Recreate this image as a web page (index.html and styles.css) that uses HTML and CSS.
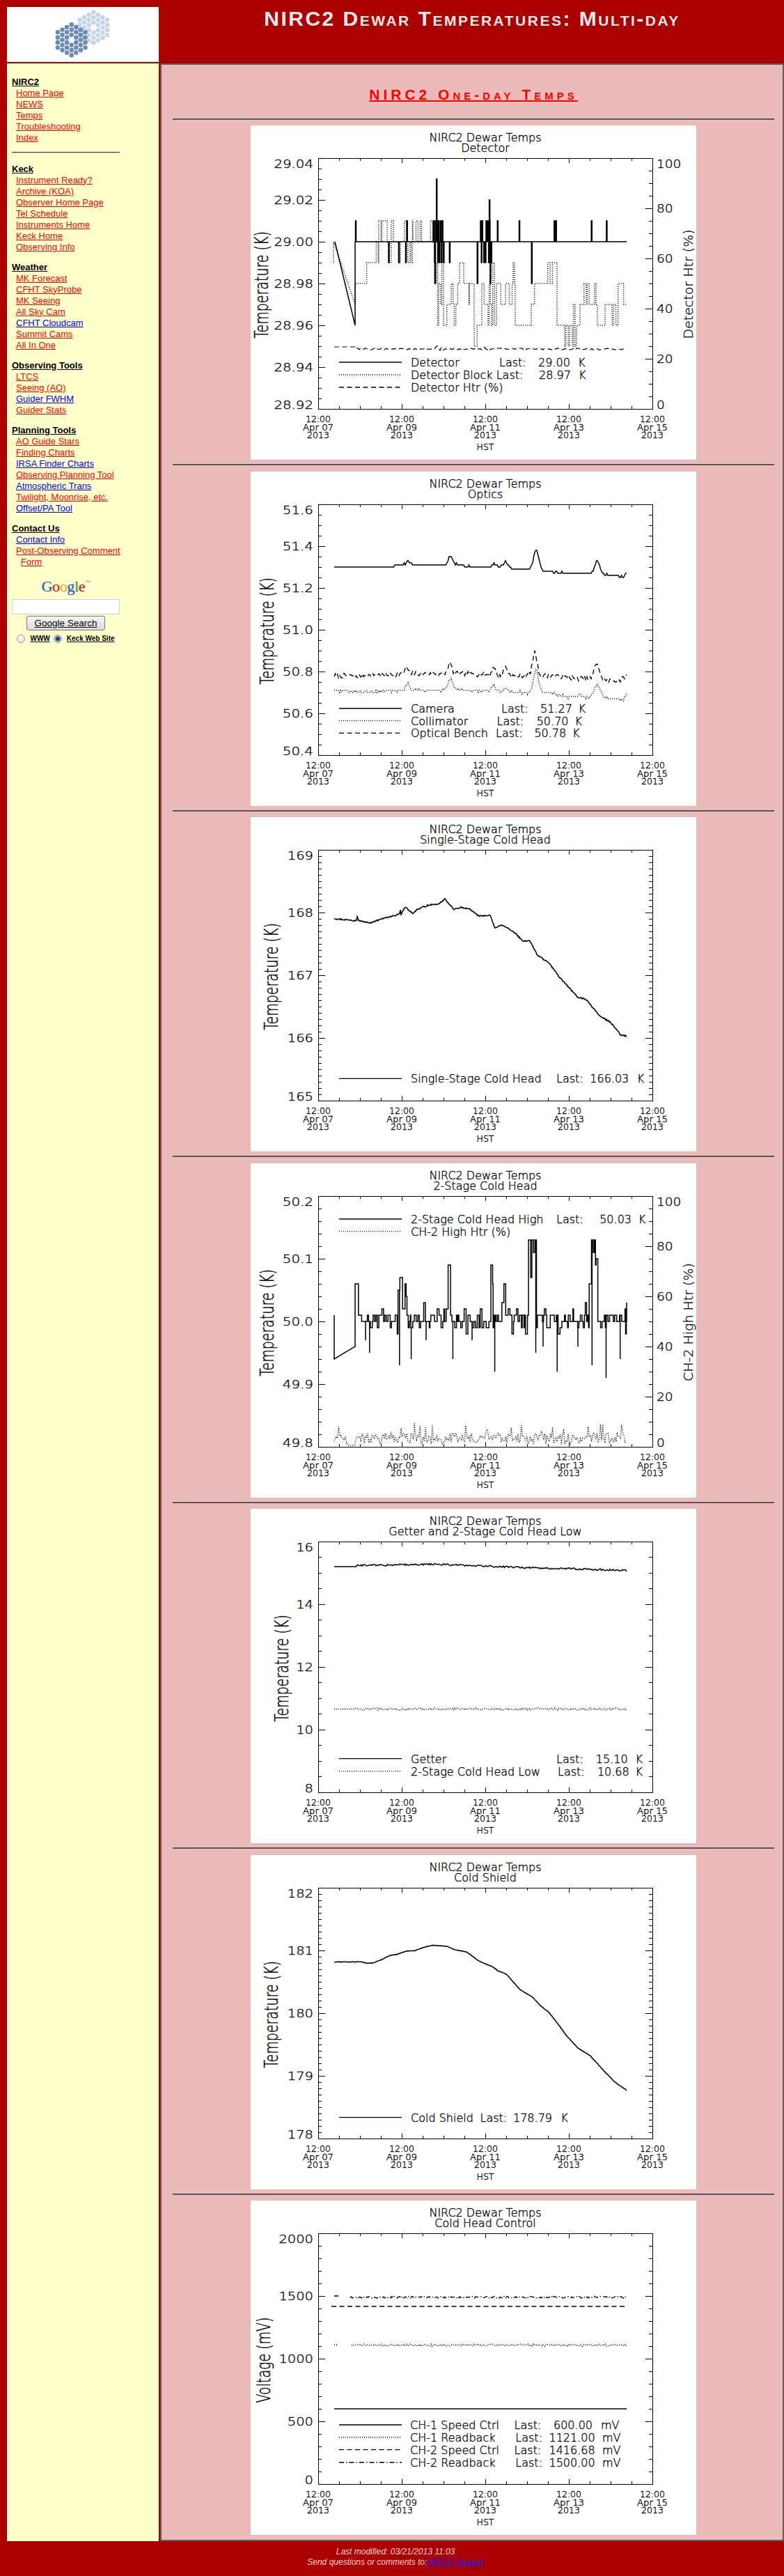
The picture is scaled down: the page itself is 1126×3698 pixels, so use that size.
FILE: index.html
```html
<!DOCTYPE html>
<html lang="en">
<head>
<meta charset="utf-8">
<title>NIRC2 Dewar Temperatures: Multi-day</title>
<link rel="stylesheet" href="styles.css">
</head>
<body>
<div class="page">
  <div class="logo"><svg id="logo" width="218" height="79" viewBox="0 0 218 79"></svg></div>
  <div class="masthead"><h1>NIRC2 Dewar Temperatures: Multi-day</h1></div>

  <nav class="side">
    <div class="side-inner">
      <div class="group">
        <div class="gh"><a href="#">NIRC2</a></div>
        <ul class="links">
          <li><a href="#">Home Page</a></li>
          <li><a href="#">NEWS</a></li>
          <li><a href="#">Temps</a></li>
          <li><a href="#">Troubleshooting</a></li>
          <li><a href="#">Index</a></li>
        </ul>
      </div>
      <hr class="side-rule">
      <div class="group">
        <div class="gh"><a href="#">Keck</a></div>
        <ul class="links">
          <li><a href="#">Instrument Ready?</a></li>
          <li><a href="#">Archive (KOA)</a></li>
          <li><a href="#">Observer Home Page</a></li>
          <li><a href="#">Tel Schedule</a></li>
          <li><a href="#">Instruments Home</a></li>
          <li><a href="#">Keck Home</a></li>
          <li><a href="#">Observing Info</a></li>
        </ul>
      </div>
      <div class="group">
        <div class="gh"><a href="#">Weather</a></div>
        <ul class="links">
          <li><a href="#">MK Forecast</a></li>
          <li><a href="#">CFHT SkyProbe</a></li>
          <li><a href="#">MK Seeing</a></li>
          <li><a href="#">All Sky Cam</a></li>
          <li><a class="new" href="#">CFHT Cloudcam</a></li>
          <li><a href="#">Summit Cams</a></li>
          <li><a href="#">All In One</a></li>
        </ul>
      </div>
      <div class="group">
        <div class="gh"><a href="#">Observing Tools</a></div>
        <ul class="links">
          <li><a href="#">LTCS</a></li>
          <li><a href="#">Seeing (AO)</a></li>
          <li><a class="new" href="#">Guider FWHM</a></li>
          <li><a href="#">Guider Stats</a></li>
        </ul>
      </div>
      <div class="group">
        <div class="gh"><a href="#">Planning Tools</a></div>
        <ul class="links">
          <li><a href="#">AO Guide Stars</a></li>
          <li><a href="#">Finding Charts</a></li>
          <li><a class="new" href="#">IRSA Finder Charts</a></li>
          <li><a href="#">Observing Planning Tool</a></li>
          <li><a class="new" href="#">Atmospheric Trans</a></li>
          <li><a href="#">Twilight, Moonrise, etc.</a></li>
          <li><a class="new" href="#">Offset/PA Tool</a></li>
        </ul>
      </div>
      <div class="group">
        <div class="gh"><a href="#">Contact Us</a></div>
        <ul class="links">
          <li><a class="new" href="#">Contact Info</a></li>
          <li><a href="#">Post-Observing Comment Form</a></li>
        </ul>
      </div>
      <form class="search" action="#">
        <div class="glogo"><span class="g1">G</span><span class="g2">o</span><span class="g3">o</span><span class="g1">g</span><span class="g4">l</span><span class="g2">e</span><span class="tm">TM</span></div>
        <input class="q" type="text" aria-label="Search">
        <button class="btn" type="button">Google Search</button>
        <div class="scope">
          <input class="radio" type="radio" name="sitesearch" aria-label="WWW"><span class="scope-lbl">WWW</span>
          <input class="radio" type="radio" name="sitesearch" checked aria-label="Keck Web Site"><span class="scope-lbl">Keck Web Site</span>
        </div>
      </form>
    </div>
  </nav>

  <main class="main">
    <h2 class="heading"><a href="#">NIRC2 One-day Temps</a></h2>
    <hr class="rule"><div class="chart"><svg class="plot" data-chart="0" width="640" height="480"></svg></div>
    <hr class="rule"><div class="chart"><svg class="plot" data-chart="1" width="640" height="480"></svg></div>
    <hr class="rule"><div class="chart"><svg class="plot" data-chart="2" width="640" height="480"></svg></div>
    <hr class="rule"><div class="chart"><svg class="plot" data-chart="3" width="640" height="480"></svg></div>
    <hr class="rule"><div class="chart"><svg class="plot" data-chart="4" width="640" height="480"></svg></div>
    <hr class="rule"><div class="chart"><svg class="plot" data-chart="5" width="640" height="480"></svg></div>
    <hr class="rule"><div class="chart"><svg class="plot" data-chart="6" width="640" height="480"></svg></div>
  </main>
</div>
<footer class="foot">
  <div>Last modified: 03/21/2013 11:03</div>
  <div>Send questions or comments to:<a href="#">NIRC2 Support</a></div>
</footer>
<script src="script.js"></script>
</body>
</html>
```

FILE: styles.css
```css
* { box-sizing: border-box; }
html, body { margin: 0; padding: 0; }
body {
  background: #aa0000;
  font-family: "Liberation Sans", Arial, sans-serif;
  font-size: 13px;
  color: #000;
}
.page {
  width: 1126px;
  padding: 10px 0 0 10px;
  display: grid;
  grid-template-columns: 218px 1fr;
  grid-template-rows: 79px auto;
  gap: 2px;
}
.logo { background: #fff; }
.logo svg { display: block; }
.masthead { display: flex; justify-content: center; align-items: flex-start; }
.masthead h1 {
  margin: 0;
  font-size: 30px;
  line-height: 34px;
  font-weight: bold;
  font-variant: small-caps;
  letter-spacing: 2.5px;
  color: #e9e9e9;
}

/* sidebar */
.side { background: #ffffcc; padding: 19px 0 0 7px; }
.side-inner { width: 160px; }
.group + .group { margin-top: 13px; }
.gh, .links li { line-height: 16px; }
.gh a { color: #000; font-weight: bold; text-decoration: underline; }
.links { list-style: none; margin: 0; padding: 0; }
.links li { padding-left: 13px; text-indent: -7px; }
.links a { color: #ff0000; text-decoration: underline; }
.links a.new { color: #0000ff; }
.side-rule {
  width: 155px;
  height: 2px;
  margin: 12px 0 14.7px;
  border: 0;
  border-top: 1px solid #444;
  border-bottom: 1px solid #c8c8c8;
}
.search {
  width: 155px;
  margin: 8px 0 0;
  display: flex;
  flex-direction: column;
  align-items: center;
}
.glogo {
  font-family: "Liberation Serif", "Times New Roman", serif;
  font-size: 22px;
  line-height: 24px;
  letter-spacing: -0.4px;
  text-shadow: 1px 1px 1px #c9c9c9;
}
.g1 { color: #2a55c8; }
.g2 { color: #c8190f; }
.g3 { color: #e7b712; }
.g4 { color: #2f9c3c; }
.tm { font-family: "Liberation Sans", sans-serif; font-size: 5px; color: #999; vertical-align: 12px; margin-left: 1px; text-shadow: none; }
.q {
  width: 155px;
  height: 22px;
  margin: 6px 0 0;
  border: 1px solid #cfcfcf;
  background: #fff;
}
.btn {
  width: 113px;
  height: 21px;
  margin-top: 2px;
  padding: 0;
  border: 1px solid #767676;
  border-radius: 3px;
  background: linear-gradient(#f6f6f6, #dcdcdc);
  font-family: "Liberation Sans", Arial, sans-serif;
  font-size: 13.5px;
  color: #000;
  text-decoration: underline;
}
.scope {
  margin-top: 6px;
  display: flex;
  align-items: center;
  font-size: 10px;
  font-weight: bold;
}
.scope-lbl { text-decoration: underline; margin-left: 7px; }
.scope-lbl + .radio { margin-left: 5px; }
.radio {
  -webkit-appearance: none;
  appearance: none;
  width: 12px;
  height: 12px;
  margin: 0;
  border: 1px solid #9a9a9a;
  border-radius: 50%;
  background: radial-gradient(circle at 40% 35%, #ffffff, #d6d6d6);
}
.radio:checked {
  background: radial-gradient(circle, #1c3c6a 0, #1c3c6a 2.4px, #8fa9cc 3.6px, #e9eef5 6px);
}

/* main */
.main {
  background: #ebbaba;
  border: 2px solid #5e5e5e;
  padding: 0 12px 7px 16px;
}
.heading {
  margin: 31px 0 21.5px;
  text-align: center;
  font-size: 21px;
  line-height: 24px;
  font-weight: bold;
  font-variant: small-caps;
  letter-spacing: 5px;
}
.heading a { color: #ff0000; text-decoration: underline; text-decoration-thickness: 2px; }
.rule {
  height: 2px;
  margin: 6px 0 8.5px;
  border: 0;
  background: #555;
}
.chart { width: 640px; height: 480px; margin: 0 auto; background: #fff; }
.plot { display: block; }
.plot text {
  font-family: "DejaVu Sans", "Liberation Sans", sans-serif;
  font-weight: 200;
  fill: #000;
  stroke: #000;
  stroke-width: 0.35px;
}

/* footer */
.foot {
  width: 1126px;
  padding: 8px 0 0 10px;
  text-align: center;
  font-style: italic;
  font-size: 12px;
  line-height: 14.5px;
  color: #ffd2d2;
}
.foot a { color: #1a1aff; text-decoration: underline; }
```

FILE: script.js
```js
(function () {
  var NS = 'http://www.w3.org/2000/svg';
  function el(tag, attrs, parent) {
    var e = document.createElementNS(NS, tag);
    for (var k in attrs) e.setAttribute(k, attrs[k]);
    if (parent) parent.appendChild(e);
    return e;
  }
  function txt(parent, s, attrs) { var t = el('text', attrs, parent); t.textContent = s; return t; }
  function rng(seed) {
    var s = seed >>> 0;
    return function () { s = (Math.imul(s, 1664525) + 1013904223) >>> 0; return s / 4294967296; };
  }
  function interp(p, x) {
    if (x <= p[0][0]) return p[0][1];
    for (var i = 1; i < p.length; i++) {
      if (x <= p[i][0]) { var a = p[i - 1], b = p[i]; return a[1] + (b[1] - a[1]) * (x - a[0]) / (b[0] - a[0]); }
    }
    return p[p.length - 1][1];
  }
  function f(n) { return String(Math.round(n * 10) / 10); }

  /* ---------- logo: two segmented mirrors ---------- */
  var logo = document.getElementById('logo');
  function hex(cx, cy, fill) {
    for (var q = -3; q <= 3; q++) for (var r = -3; r <= 3; r++) {
      if (Math.abs(q + r) > 3 || (q === 0 && r === 0)) continue;
      el('circle', { cx: f(cx + q * 6.6), cy: f(cy + (r + q / 2) * 7.3), r: 3.3, fill: fill }, logo);
    }
  }
  hex(124.3, 29.5, '#c6d5e6');
  hex(92.7, 47.3, '#6a8cb4');

  /* ---------- chart helpers ---------- */
  var X0 = 97, X1 = 577, YT = 47, YB = 407;
  var DASH = { solid: null, dot: '1 2', dash: '7 4.5', dashdot: '7 3 1.5 3' };
  function R(v) { return YB - v / 100 * 360; }

  function hatch(Y, start, segs, q, seed, smin, smax) {
    var r = rng(seed), d = start;
    segs.forEach(function (s) {
      var a = s[0], b = s[1], lo = s[2], hi = s[3], n = Math.round((hi - lo) / q), x = a;
      d += 'H' + f(x);
      while (x < b - 0.01) {
        var v = lo + Math.round(r() * n) * q;
        d += 'V' + f(Y(v));
        x = Math.min(b, x + smin + r() * (smax - smin));
        d += 'H' + f(x);
      }
    });
    return d;
  }
  function noisy(x0, x1, step, fn, seed, start) {
    var r = rng(seed), d = start || '';
    for (var x = x0; x <= x1 + 0.001; x += step) d += (d ? 'L' : 'M') + f(x) + ' ' + f(fn(x, r));
    return d;
  }
  function bumpy(Y, base, bumps, q, noise, seed, x0, x1, step) {
    return noisy(x0, x1, step, function (x, r) {
      var v = interp(base, x);
      bumps.forEach(function (b) { v += b[1] * Math.exp(-Math.pow((x - b[0]) / b[2], 2)); });
      v += (r() - 0.5) * noise;
      v = Math.round(v / q) * q;
      return Y(v);
    }, seed);
  }

  /* ---------- chart data ---------- */
  function c1det(Y) {
    var r = rng(11), base = f(Y(29.00));
    var d = 'M121 ' + base + 'L150 ' + f(Y(28.96)) + 'V' + base;
    var sp = [[150.5, 29.01], [198, 28.99], [212.5, 28.99], [222.5, 28.99], [224.2, 29.01], [264.5, 28.98],
      [266.7, 29.03], [285.4, 28.99], [325.3, 28.98], [342.6, 29.02], [343.9, 28.98], [354.3, 29.01],
      [385.5, 29.01], [403.3, 28.98], [435.8, 29.01], [438.2, 29.01], [489.2, 29.01], [510.9, 29.01]];
    for (var x = 262; x <= 277; x += 0.8 + r() * 1.2) sp.push([x, r() < 0.5 ? 29.01 : 28.99]);
    for (x = 330; x <= 346; x += 1 + r() * 1.6) sp.push([x, r() < 0.55 ? 29.01 : 28.99]);
    sp.sort(function (a, b) { return a[0] - b[0]; });
    sp.forEach(function (s) { d += 'H' + f(s[0]) + 'V' + f(Y(s[1])) + 'H' + f(s[0] + 1) + 'V' + base; });
    return d + 'H540';
  }
  function c1block(Y) {
    var segs = [[150, 173, 28.98, 28.99], [173, 184, 28.99, 29.00], [184, 197, 29.00, 29.01], [197, 200, 28.98, 29.00],
      [200, 233, 28.99, 29.01], [233, 236, 29.00, 29.02], [236, 262, 29.00, 29.01], [262, 277, 28.96, 29.01],
      [277, 295, 28.96, 28.98], [295, 314, 28.97, 28.99], [314, 321, 28.98, 28.98], [321, 332, 28.95, 28.96],
      [332, 353, 28.96, 28.99], [353, 369, 28.97, 28.98], [369, 380, 28.97, 28.99], [380, 403, 28.96, 28.96],
      [403, 412, 28.96, 28.98], [412, 423, 28.98, 28.98], [423, 440, 28.98, 28.99], [440, 451, 28.96, 28.96],
      [451, 462, 28.95, 28.96], [462, 475, 28.95, 28.97], [475, 496, 28.97, 28.98], [496, 498, 28.95, 28.99],
      [498, 509, 28.96, 28.96], [509, 523, 28.96, 28.97], [523, 540, 28.96, 28.98]];
    var start = 'M119 ' + f(Y(28.99)) + 'V' + f(Y(29.00)) + 'L150 ' + f(Y(28.97));
    return hatch(Y, start, segs, 0.01, 21, 1.2, 3.5);
  }
  function c1htr() {
    return noisy(150, 540, 2, function (x, r) {
      var y = 321 + (r() - 0.5) * 2.4;
      if ((x > 262 && x < 278) || (x > 330 && x < 346)) y += (r() - 0.6) * 8;
      return y;
    }, 31, 'M120 318H150');
  }

  function c4main(Y) {
    var r = rng(404);
    var d = 'M120 ' + f(Y(49.99)) + 'V' + f(Y(50.01)) + 'V' + f(Y(49.94)) + 'L150 ' + f(Y(49.96));
    var bursts = [[150, 153, 50.06], [211, 224, 50.07], [279, 285, 50.09], [345, 348, 50.09], [360, 364, 50.06],
      [399, 410, 50.13], [486, 497, 50.13], [535, 538, 50.06]];
    var downs = [[165, 49.97], [170.8, 49.95], [213.8, 49.93], [230.6, 49.94], [252, 49.97], [290.4, 49.94],
      [318, 49.97], [350.6, 49.92], [409.5, 49.95], [420, 49.96], [440.2, 49.92], [470, 49.96], [490.3, 49.93],
      [510.5, 49.91], [530.7, 49.94]];
    var x = 150, di = 0;
    while (x < 540) {
      var v, b = null;
      bursts.forEach(function (bb) { if (x >= bb[0] && x <= bb[1]) b = bb; });
      var t = r();
      if (b) v = t < 0.45 ? b[2] : b[2] - 0.01 * Math.ceil(r() * 7);
      else v = t < 0.38 ? 50.00 : t < 0.68 ? 50.01 : t < 0.9 ? 49.99 : t < 0.95 ? 50.02 : t < 0.98 ? 49.98 : 50.03;
      d += 'V' + f(Y(v));
      var nx = Math.min(540, x + 0.7 + r() * 2.2);
      while (di < downs.length && downs[di][0] < nx) {
        d += 'H' + f(downs[di][0]) + 'V' + f(Y(downs[di][1])) + 'V' + f(Y(v));
        di++;
      }
      d += 'H' + f(nx);
      x = nx;
    }
    return d + 'V' + f(Y(50.03));
  }
  function c4htr() {
    return noisy(120, 540, 1.6, function (x, r) {
      var p = 1 + r() * 4.5;
      if (r() < 0.08) p += 4;
      if (x > 140 && x < 150) p = 0.5;
      return R(p);
    }, 77);
  }

  var pts3 = [[120, 146], [152, 148.7], [153, 143.4], [155, 148.7], [171.7, 152], [188.5, 146], [213.8, 139.4], [215, 132.7],
    [216, 139], [222.2, 128.7], [232.7, 138.7], [239, 132.7], [255.9, 126], [268.5, 125.4], [279, 117.7], [291.6, 132],
    [302.1, 129.4], [314.8, 132], [327.4, 142], [344.2, 141], [350.6, 158.7], [361.1, 155.4], [377.9, 164.4],
    [390.5, 177.7], [401.1, 177.7], [411.6, 197.7], [428.4, 209.4], [443.2, 229.4], [470.5, 259.4], [481, 261],
    [502, 286], [516.8, 294.4], [531.5, 312.7], [540, 314.4]];
  var pts6 = [[119, 155], [121.2, 153.4], [159, 153.4], [167.5, 155.4], [175.9, 155], [188.5, 150], [199, 144.4],
    [209.6, 142.7], [224.3, 137.7], [234.8, 137.7], [247.4, 132.7], [262.2, 129.4], [281.1, 131], [293.7, 136],
    [310.6, 139.4], [327.4, 152], [348.4, 161], [354.8, 166], [367.4, 171], [386.3, 192.7], [405.3, 204.4],
    [415.8, 216], [428.4, 226], [439, 239.4], [453.7, 259.4], [470.5, 277.7], [487.3, 287.7], [508.4, 311],
    [523.1, 326], [540, 337.7]];

  var charts = [
    {
      title2: 'Detector', ymin: 28.92, ymax: 29.04, major: 0.02, minor: 4, dec: 2,
      ytitle: 'Temperature (K)', ytx: 25.2, right: 'Detector Htr (%)',
      series: [
        { style: 'solid', w: 1.5, d: c1det },
        { style: 'dot', w: 1.5, d: c1block },
        { style: 'dash', w: 1.2, d: c1htr }
      ],
      legend: [
        { y: 340, style: 'solid', parts: [['Detector', 230], ['Last:', 357], ['29.00', 413], ['K', 470]] },
        { y: 358, style: 'dot', parts: [['Detector Block Last:', 230], ['28.97', 414], ['K', 471]] },
        { y: 376, style: 'dash', parts: [['Detector Htr (%)', 230]] }
      ]
    },
    {
      title2: 'Optics', ymin: 50.4, ymax: 51.6, major: 0.2, minor: 4, dec: 1,
      ytitle: 'Temperature (K)', ytx: 32.8,
      series: [
        { style: 'solid', w: 1.5, d: function (Y) {
          return bumpy(Y, [[120, 51.30], [200, 51.30], [215, 51.31], [300, 51.31], [322, 51.30], [370, 51.30], [375, 51.29],
            [400, 51.29], [425, 51.28], [455, 51.27], [500, 51.27], [515, 51.26], [535, 51.255], [540, 51.27]],
            [[226, 0.02, 4], [287, 0.04, 5], [349, 0.02, 3.5], [366, 0.025, 4], [410, 0.10, 5], [498, 0.06, 5]],
            0.01, 0.008, 5, 120, 540, 1.5);
        } },
        { style: 'dot', w: 1.5, d: function (Y) {
          return bumpy(Y, [[120, 50.71], [160, 50.70], [200, 50.71], [300, 50.71], [380, 50.70], [430, 50.70],
            [450, 50.68], [480, 50.68], [520, 50.67], [535, 50.66], [540, 50.70]],
            [[226, 0.03, 4], [287, 0.06, 5], [349, 0.03, 3.5], [366, 0.02, 4], [410, 0.11, 5], [498, 0.06, 6]],
            0.01, 0.012, 6, 120, 540, 1.5);
        } },
        { style: 'dash', w: 1.3, d: function (Y) {
          return bumpy(Y, [[120, 50.78], [160, 50.78], [230, 50.79], [300, 50.79], [380, 50.78], [430, 50.78],
            [460, 50.77], [500, 50.76], [530, 50.755], [540, 50.78]],
            [[224, 0.03, 3.5], [286, 0.05, 4], [349, 0.04, 3], [366, 0.04, 4], [408, 0.11, 4.5], [497, 0.08, 5]],
            0.005, 0.02, 7, 120, 540, 1.5);
        } }
      ],
      legend: [
        { y: 340, style: 'solid', parts: [['Camera', 230], ['Last:', 360], ['51.27', 416], ['K', 470.5]] },
        { y: 357.7, style: 'dot', parts: [['Collimator', 230], ['Last:', 353.5], ['50.70', 410.7], ['K', 465.5]] },
        { y: 375.4, style: 'dash', parts: [['Optical Bench', 230], ['Last:', 352], ['50.78', 407.4], ['K', 462]] }
      ]
    },
    {
      title2: 'Single-Stage Cold Head', ymin: 165, ymax: 169, major: 1, minor: 10, dec: 0,
      ytitle: 'Temperature (K)', ytx: 39.1,
      series: [
        { style: 'solid', w: 1.6, d: function () {
          return noisy(120, 540, 1, function (x, r) { return interp(pts3, x) + (r() - 0.5) * 1.8; }, 3);
        } }
      ],
      legend: [
        { y: 375.4, style: 'solid', parts: [['Single-Stage Cold Head', 230], ['Last:', 439], ['166.03', 487.3], ['K', 554.7]] }
      ]
    },
    {
      title2: '2-Stage Cold Head', ymin: 49.8, ymax: 50.2, major: 0.1, minor: 5, dec: 1,
      ytitle: 'Temperature (K)', ytx: 32.8, right: 'CH-2 High Htr (%)',
      series: [
        { style: 'solid', w: 1.5, d: c4main },
        { style: 'dot', w: 1.4, d: c4htr }
      ],
      legend: [
        { y: 80, style: 'solid', parts: [['2-Stage Cold Head High', 230], ['Last:', 439], ['50.03', 501.2], ['K', 556.8]] },
        { y: 97.7, style: 'dot', parts: [['CH-2 High Htr (%)', 230]] }
      ]
    },
    {
      title2: 'Getter and 2-Stage Cold Head Low', ymin: 8, ymax: 16, major: 2, minor: 4, dec: 0,
      ytitle: 'Temperature (K)', ytx: 53.8,
      series: [
        { style: 'solid', w: 1.5, d: function () {
          var b = [[120, 83], [150, 83], [152, 81.5], [256, 79.5], [300, 81], [400, 84.5], [480, 86.5], [540, 88.5]];
          return noisy(120, 540, 1.5, function (x, r) { return x < 152 ? 83 : interp(b, x) + (r() - 0.5) * 2.6; }, 55);
        } },
        { style: 'dot', w: 1.5, d: function () {
          return noisy(120, 540, 1.5, function (x, r) { return x < 150 ? 287.5 : 287.5 + (r() - 0.5) * 3.2; }, 56);
        } }
      ],
      legend: [
        { y: 358.7, style: 'solid', parts: [['Getter', 230], ['Last:', 439], ['15.10', 495.8], ['K', 552.6]] },
        { y: 376.7, style: 'dot', parts: [['2-Stage Cold Head Low', 230], ['Last:', 441], ['10.68', 497.9], ['K', 552.6]] }
      ]
    },
    {
      title2: 'Cold Shield', ymin: 178, ymax: 182, major: 1, minor: 10, dec: 0,
      ytitle: 'Temperature (K)', ytx: 39.1,
      series: [
        { style: 'solid', w: 1.6, d: function () {
          return noisy(120, 540, 1, function (x, r) { return interp(pts6, x) + (r() - 0.5) * 0.6; }, 6);
        } }
      ],
      legend: [
        { y: 376.7, style: 'solid', parts: [['Cold Shield', 230], ['Last:', 329.5], ['178.79', 377], ['K', 445.2]] }
      ]
    },
    {
      title2: 'Cold Head Control', ymin: 0, ymax: 2000, major: 500, minor: 5, dec: 0,
      ytitle: 'Voltage (mV)', ytx: 28.2,
      series: [
        { style: 'solid', w: 1.5, d: function (Y) { return 'M120 ' + f(Y(600)) + 'H540'; } },
        { style: 'dot', w: 1.5, d: function (Y) {
          return 'M120 ' + f(Y(1110)) + 'H126' + noisy(145, 540, 1.5, function (x, r) { return Y(1108 + (r() - 0.5) * 16); }, 71, ' ').replace(/^ L/, 'M');
        } },
        { style: 'dash', w: 1.3, d: function (Y) { return 'M116 ' + f(Y(1416.68)) + 'H540'; } },
        { style: 'dashdot', w: 1.3, d: function (Y) {
          return 'M120 ' + f(Y(1500)) + 'H126' + noisy(143, 540, 1.5, function (x, r) { return Y(1490 + (r() - 0.5) * 16); }, 72, ' ').replace(/^ L/, 'M');
        } }
      ],
      legend: [
        { y: 322, style: 'solid', parts: [['CH-1 Speed Ctrl', 229], ['Last:', 378.6], ['600.00', 435], ['mV', 503]] },
        { y: 340, style: 'dot', parts: [['CH-1 Readback', 229], ['Last:', 380.3], ['1121.00', 428.5], ['mV', 505]] },
        { y: 357.7, style: 'dash', parts: [['CH-2 Speed Ctrl', 229], ['Last:', 378.6], ['1416.68', 428.5], ['mV', 505]] },
        { y: 376, style: 'dashdot', parts: [['CH-2 Readback', 229], ['Last:', 380.3], ['1500.00', 428.5], ['mV', 505]] }
      ]
    }
  ];

  function labelWidth(s) { var w = 0; for (var i = 0; i < s.length; i++) w += s[i] === '.' ? 7 : 12.4; return w; }

  function build(svg, cfg) {
    svg.setAttribute('viewBox', '0 0 640 480');
    el('rect', { x: 0, y: 0, width: 640, height: 480, fill: '#fff' }, svg);
    var Y = function (v) { return YB - (v - cfg.ymin) / (cfg.ymax - cfg.ymin) * (YB - YT); };

    var g = el('g', { fill: 'none', stroke: '#000', 'stroke-linejoin': 'miter' }, svg);
    cfg.series.forEach(function (s) {
      var a = { d: s.d(Y), 'stroke-width': s.w };
      if (DASH[s.style]) a['stroke-dasharray'] = DASH[s.style];
      el('path', a, g);
    });

    var ax = el('g', { stroke: '#000', 'stroke-width': 1, fill: 'none', 'shape-rendering': 'crispEdges' }, svg);
    el('rect', { x: X0, y: YT, width: X1 - X0, height: YB - YT }, ax);
    var d = '';
    for (var i = 0; i <= 16; i++) {
      var x = X0 + i * 30, L = (i % 4 === 0) ? 7 : 3.6;
      d += 'M' + x + ' ' + YB + 'v' + (-L) + 'M' + x + ' ' + YT + 'v' + L;
    }
    var nMaj = Math.round((cfg.ymax - cfg.ymin) / cfg.major);
    var st = (YB - YT) / nMaj / cfg.minor;
    for (i = 0; i <= nMaj * cfg.minor; i++) {
      var y = YB - i * st, Ly = (i % cfg.minor === 0) ? 9.6 : 4.8;
      d += 'M' + X0 + ' ' + f(y) + 'h' + Ly;
      if (!cfg.right) d += 'M' + X1 + ' ' + f(y) + 'h' + (-Ly);
    }
    if (cfg.right) {
      for (i = 0; i <= 20; i++) {
        var yr = YB - i * 18, Lr = (i % 4 === 0) ? 9.6 : 4.8;
        d += 'M' + X1 + ' ' + yr + 'h' + (-Lr);
      }
    }
    el('path', { d: d }, ax);

    // titles
    txt(svg, 'NIRC2 Dewar Temps', { x: 337, y: 23, 'text-anchor': 'middle', 'font-size': 16 });
    txt(svg, cfg.title2, { x: 337, y: 38, 'text-anchor': 'middle', 'font-size': 16 });

    // y labels
    for (i = 0; i <= nMaj; i++) {
      var v = cfg.ymin + i * cfg.major, yy = Y(v);
      var yc = i === 0 ? yy - 6 : (i === nMaj ? yy + 8 : yy);
      var s = v.toFixed(cfg.dec);
      txt(svg, s, { x: 90, y: f(yc + 5.85), 'text-anchor': 'end', 'font-size': 16,
        textLength: labelWidth(s), lengthAdjust: 'spacingAndGlyphs' });
    }
    if (cfg.right) {
      for (i = 0; i <= 5; i++) {
        var pv = i * 20, py = R(pv);
        var pc = i === 0 ? py - 6 : (i === 5 ? py + 8 : py);
        var ps = String(pv);
        txt(svg, ps, { x: 583, y: f(pc + 5.85), 'font-size': 16, textLength: ps.length * 11.8, lengthAdjust: 'spacingAndGlyphs' });
      }
      txt(svg, cfg.right, { 'font-size': 19, 'text-anchor': 'middle',
        transform: 'translate(635.3 228) rotate(-90) scale(1 0.95)' });
    }
    txt(svg, cfg.ytitle, { 'font-size': 19, 'text-anchor': 'middle',
      transform: 'translate(' + cfg.ytx + ' 229) rotate(-90) scale(1 1.42)' });

    // x labels
    var days = ['Apr 07', 'Apr 09', 'Apr 11', 'Apr 13', 'Apr 15'];
    for (i = 0; i < 5; i++) {
      var lx = X0 + i * 120;
      txt(svg, '12:00', { x: lx, y: 426, 'text-anchor': 'middle', 'font-size': 12.5 });
      txt(svg, days[i], { x: lx, y: 437.5, 'text-anchor': 'middle', 'font-size': 12.5, textLength: 44, lengthAdjust: 'spacingAndGlyphs' });
      txt(svg, '2013', { x: lx, y: 449, 'text-anchor': 'middle', 'font-size': 12.5 });
    }
    txt(svg, 'HST', { x: 337, y: 465.5, 'text-anchor': 'middle', 'font-size': 12.5 });

    // legend
    cfg.legend.forEach(function (row) {
      var a = { x1: 127, x2: 217, y1: row.y, y2: row.y, stroke: '#000', 'stroke-width': 1.3 };
      if (DASH[row.style]) a['stroke-dasharray'] = DASH[row.style];
      el('line', a, svg);
      row.parts.forEach(function (p) { txt(svg, p[0], { x: p[1], y: f(row.y + 6), 'font-size': 16 }); });
    });
  }

  var svgs = document.querySelectorAll('svg.plot');
  for (var n = 0; n < svgs.length; n++) build(svgs[n], charts[+svgs[n].getAttribute('data-chart')]);
})();
```
